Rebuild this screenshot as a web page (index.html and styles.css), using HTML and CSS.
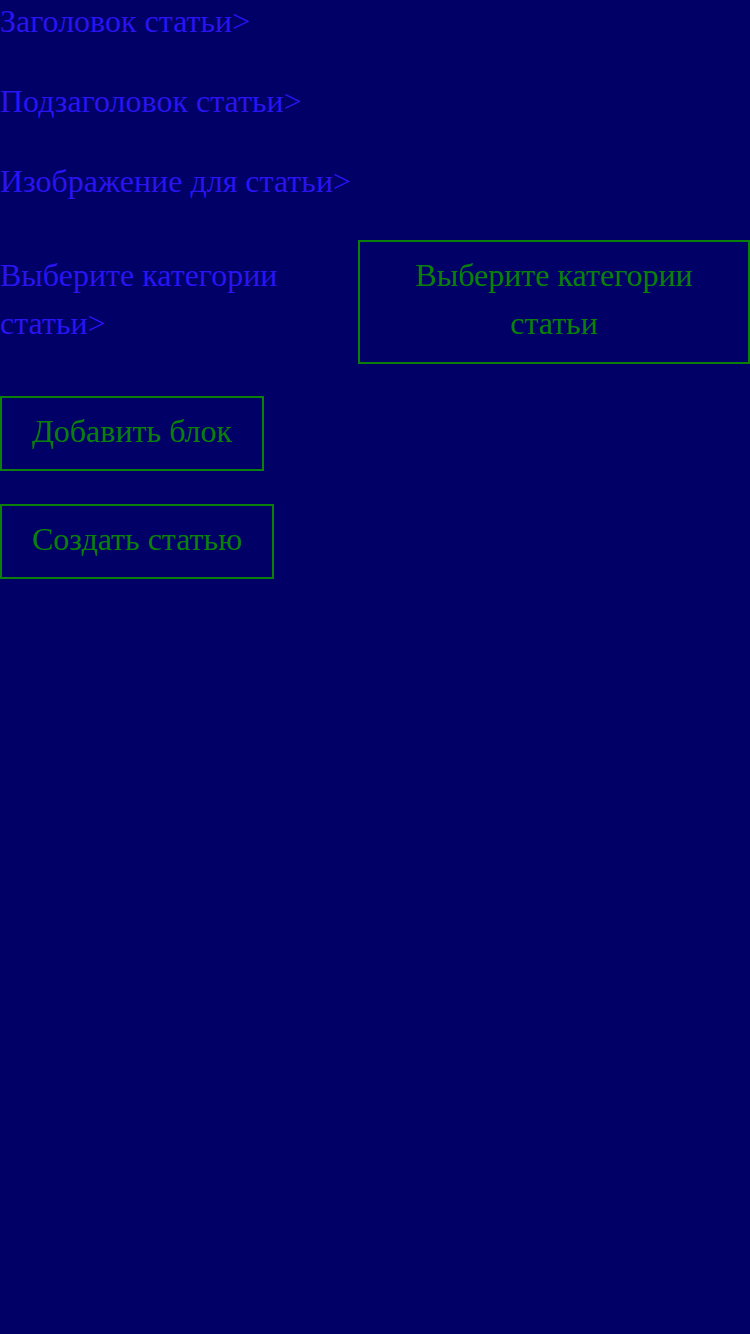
FILE: index.html
```html
<!DOCTYPE html>
<html lang="ru">
<head>
<meta charset="utf-8">
<title>Создать статью</title>
<link rel="stylesheet" href="styles.css">
</head>
<body>
<main class="page">
  <div class="field">Заголовок статьи&gt;</div>
  <div class="field">Подзаголовок статьи&gt;</div>
  <div class="field">Изображение для статьи&gt;</div>
  <div class="row">
    <div class="field-label">Выберите категории статьи&gt;</div>
    <div class="box">Выберите категории статьи</div>
  </div>
  <div class="actions">
    <button class="btn">Добавить блок</button>
    <button class="btn">Создать статью</button>
  </div>
</main>
</body>
</html>
```
FILE: styles.css
```css
html, body {
  margin: 0;
  padding: 0;
  background: #000066;
  min-height: 100%;
}
body {
  font-family: "Liberation Serif", "Times New Roman", serif;
  font-size: 32px;
  line-height: 48px;
  color: #2a14f0;
}
.page {
  display: flex;
  flex-direction: column;
  align-items: flex-start;
  gap: 32px;
}
.field {
  color: #2a14f0;
  line-height: 43px;
  padding-bottom: 5px;
}
.row {
  display: flex;
  align-items: center;
  width: 100%;
}
.field-label {
  flex: 0 0 358px;
  color: #2a14f0;
  padding-bottom: 7px;
}
.box {
  flex: 1;
  border: 2px solid #0a800a;
  color: #0a800a;
  text-align: center;
  padding: 9px 20px 15px;
}
.actions {
  display: flex;
  flex-direction: column;
  align-items: flex-start;
  gap: 33px;
}
.btn {
  font: inherit;
  line-height: 48px;
  background: transparent;
  color: #0a800a;
  border: 2px solid #0a800a;
  padding: 9px 30px 14px;
  margin: 0;
  cursor: pointer;
}
```
